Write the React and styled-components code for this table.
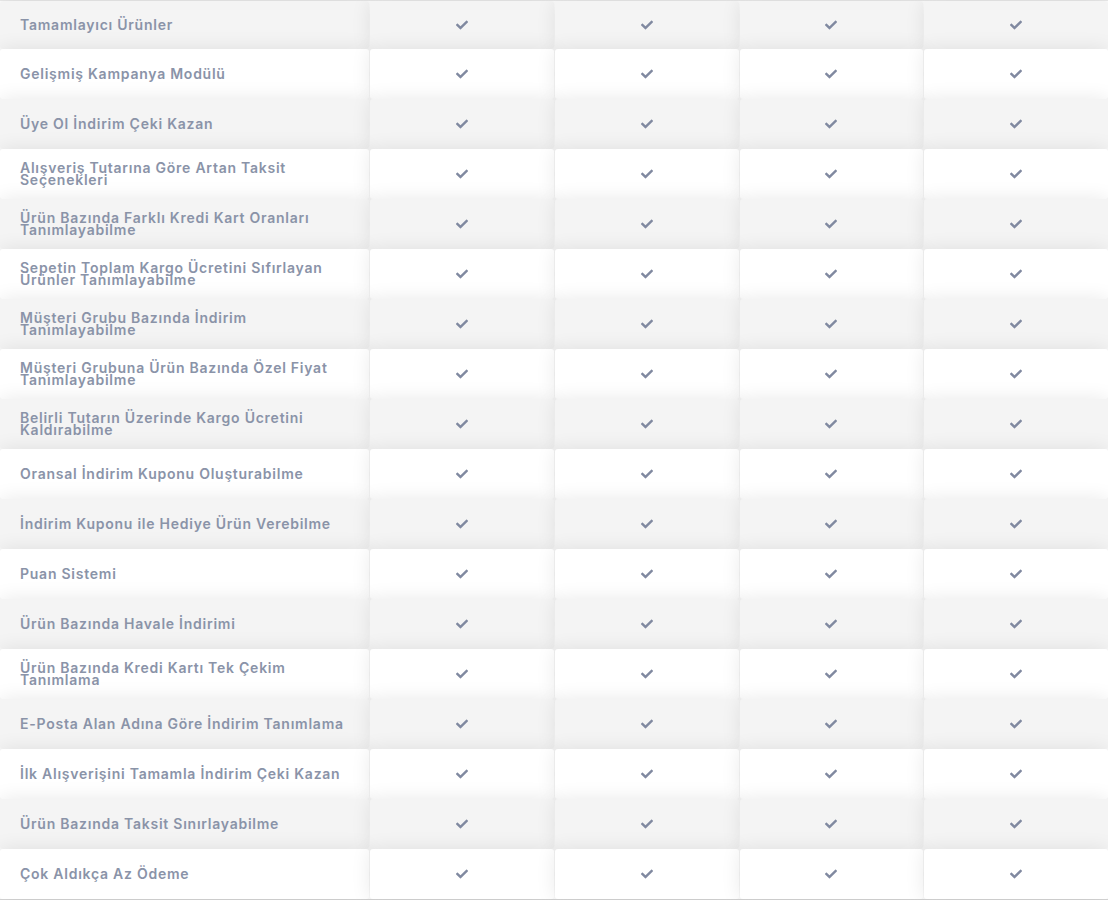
import React from 'react';
import styled, { createGlobalStyle } from 'styled-components';
import { FaCheck } from 'react-icons/fa';

const GlobalStyle = createGlobalStyle`
  html, body {
    margin: 0;
    padding: 0;
    background: #ffffff;
    overflow: hidden;
  }
  body {
    font-family: Inter, "Open Sans", sans-serif;
  }
`;

const Table = styled.div`
  width: 1108px;
  border-top: 1px solid #e9e9e9;
  border-bottom: 1px solid #d6d6d6;
`;

const Row = styled.div`
  display: grid;
  grid-template-columns: 369px repeat(4, 1fr);
  column-gap: 1px;
  height: ${(props) => (props.first ? '48px' : '50px')};
`;

const Cell = styled.div`
  background: ${(props) => (props.striped ? '#f4f4f4' : '#ffffff')};
  box-shadow: 0 0 20px rgba(0, 0, 0, 0.09);
  border-radius: 3px;
  display: flex;
  align-items: center;
`;

const Label = styled(Cell)`
  padding: 0 20px;
  font-size: 14px;
  font-weight: 600;
  letter-spacing: 0.75px;
  line-height: 12.5px;
  color: #8a93a8;
`;

const Value = styled(Cell)`
  justify-content: center;
  color: #8089a0;
  svg {
    width: 12px;
    height: 12px;
  }
`;

const features = [
  'Tamamlayıcı Ürünler',
  'Gelişmiş Kampanya Modülü',
  'Üye Ol İndirim Çeki Kazan',
  'Alışveriş Tutarına Göre Artan Taksit Seçenekleri',
  'Ürün Bazında Farklı Kredi Kart Oranları Tanımlayabilme',
  'Sepetin Toplam Kargo Ücretini Sıfırlayan Ürünler Tanımlayabilme',
  'Müşteri Grubu Bazında İndirim Tanımlayabilme',
  'Müşteri Grubuna Ürün Bazında Özel Fiyat Tanımlayabilme',
  'Belirli Tutarın Üzerinde Kargo Ücretini Kaldırabilme',
  'Oransal İndirim Kuponu Oluşturabilme',
  'İndirim Kuponu ile Hediye Ürün Verebilme',
  'Puan Sistemi',
  'Ürün Bazında Havale İndirimi',
  'Ürün Bazında Kredi Kartı Tek Çekim Tanımlama',
  'E-Posta Alan Adına Göre İndirim Tanımlama',
  'İlk Alışverişini Tamamla İndirim Çeki Kazan',
  'Ürün Bazında Taksit Sınırlayabilme',
  'Çok Aldıkça Az Ödeme',
];

const plans = [0, 1, 2, 3];

export default function App() {
  return (
    <>
      <GlobalStyle />
      <Table>
        {features.map((name, index) => {
          const striped = index % 2 === 0;
          return (
            <Row key={name} first={index === 0}>
              <Label striped={striped}>{name}</Label>
              {plans.map((plan) => (
                <Value key={plan} striped={striped}>
                  <FaCheck />
                </Value>
              ))}
            </Row>
          );
        })}
      </Table>
    </>
  );
}
